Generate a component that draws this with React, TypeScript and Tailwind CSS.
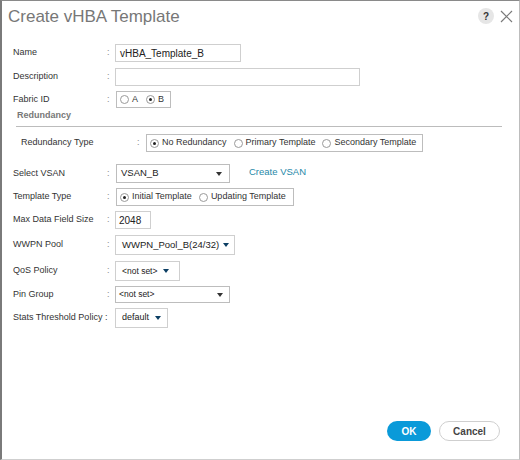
import React from "react";

const font = { fontFamily: '"Liberation Sans", Arial, sans-serif' };

function Radio({ checked }: { checked?: boolean }) {
  return (
    <span className="inline-flex w-[9px] h-[9px] rounded-full border border-[#9a9a9a] bg-white items-center justify-center shrink-0">
      {checked && <span className="w-[3px] h-[3px] rounded-full bg-[#222]" />}
    </span>
  );
}

function Arrow({ color = "#333" }: { color?: string }) {
  return (
    <svg width="6" height="4" viewBox="0 0 6 4" className="shrink-0">
      <path d="M0 0 L6 0 L3 4 Z" fill={color} />
    </svg>
  );
}

function Label({ children, w = "w-[94px]" }: { children: React.ReactNode; w?: string }) {
  return <div className={`${w} shrink-0 text-[#333]`}>{children}</div>;
}

function Colon() {
  return <div className="w-[8px] shrink-0 text-[#888]">:</div>;
}

export default function App() {
  return (
    <div
      style={font}
      className="w-[520px] h-[460px] bg-white border-l-2 border-t border-r border-b border-l-[#7a7a7a] border-t-[#8a8a8a] border-r-[#bdbdbd] border-b-[#cfcfcf] relative text-[9px] text-[#333] overflow-hidden"
    >
      {/* Header */}
      <div className="flex items-center h-[30px] pl-[6px] pr-[6px]">
        <div className="text-[17px] text-[#777] leading-none">Create vHBA Template</div>
        <div className="ml-auto flex items-center gap-[6px]">
          <div className="w-[16px] h-[16px] rounded-full bg-[#e6e6e6] flex items-center justify-center text-[10px] font-bold text-[#333]">?</div>
          <svg width="13" height="13" viewBox="0 0 13 13">
            <path d="M1 1 L12 12 M12 1 L1 12" stroke="#7a7a7a" strokeWidth="1.2" />
          </svg>
        </div>
      </div>

      <div className="pl-[11px] flex flex-col">
        {/* Name */}
        <div className="flex items-center h-[18px] mt-[13px]">
          <Label>Name</Label>
          <Colon />
          <div className="w-[126px] h-[18px] border border-[#cfcfcf] flex items-center px-[4px] text-[#222] text-[10px]">vHBA_Template_B</div>
        </div>
        {/* Description */}
        <div className="flex items-center h-[18px] mt-[6px]">
          <Label>Description</Label>
          <Colon />
          <div className="w-[245px] h-[18px] border border-[#cfcfcf]" />
        </div>
        {/* Fabric */}
        <div className="flex items-center h-[17px] mt-[5px]">
          <Label>Fabric ID</Label>
          <Colon />
          <div className="h-[17px] border border-[#bdbdbd] flex items-center gap-[3px] px-[3px] pr-[6px] ml-[1px]">
            <Radio />
            <span>A</span>
            <span className="w-[2px]" />
            <Radio checked />
            <span>B</span>
          </div>
        </div>
        {/* Redundancy section */}
        <div className="mt-[1px] pl-[4px] text-[9px] font-bold text-[#777] h-[12px] leading-[12px]">Redundancy</div>
        <div className="mt-[5px] ml-[3px] w-[486px] h-px bg-[#bcbcbc]" />
        <div className="flex items-center h-[18px] mt-[7px] pl-[8px]">
          <Label w="w-[116px]">Redundancy Type</Label>
          <Colon />
          <div className="h-[18px] border border-[#bdbdbd] flex items-center gap-[3px] pl-[3px] pr-[6px] ml-[1px]">
            <Radio checked />
            <span>No Redundancy</span>
            <span className="w-[1px]" />
            <Radio />
            <span>Primary Template</span>
            <span className="w-[1px]" />
            <Radio />
            <span>Secondary Template</span>
          </div>
        </div>
        {/* Select VSAN */}
        <div className="flex items-center h-[19px] mt-[12px]">
          <Label>Select VSAN</Label>
          <Colon />
          <div className="w-[114px] h-[19px] border border-[#bdbdbd] flex items-center px-[4px] ml-[1px]">
            <span className="text-[#222] text-[9.5px]">VSAN_B</span>
            <span className="ml-auto mr-[3px]"><Arrow /></span>
          </div>
          <span className="ml-[19px] text-[#1f88a8] text-[9.5px] -mt-[3px]">Create VSAN</span>
        </div>
        {/* Template Type */}
        <div className="flex items-center h-[18px] mt-[5px]">
          <Label>Template Type</Label>
          <Colon />
          <div className="h-[18px] border border-[#bdbdbd] flex items-center gap-[3px] pl-[3px] pr-[7px] ml-[1px]">
            <Radio checked />
            <span>Initial Template</span>
            <span className="w-[1px]" />
            <Radio />
            <span>Updating Template</span>
          </div>
        </div>
        {/* Max Data Field Size */}
        <div className="flex items-center h-[18px] mt-[5px]">
          <Label>Max Data Field Size</Label>
          <Colon />
          <div className="w-[36px] h-[18px] border border-[#cfcfcf] flex items-center px-[3px] text-[#222] text-[10px]">2048</div>
        </div>
        {/* WWPN Pool */}
        <div className="flex items-center h-[20px] mt-[6px]">
          <Label>WWPN Pool</Label>
          <Colon />
          <div className="w-[120px] h-[20px] border border-[#cfcfcf] flex items-center pl-[6px] pr-[6px] gap-[4px]">
            <span className="text-[#222] text-[9.5px]">WWPN_Pool_B(24/32)</span>
            <Arrow color="#0b3e63" />
          </div>
        </div>
        {/* QoS Policy */}
        <div className="flex items-center h-[20px] mt-[6px]">
          <Label>QoS Policy</Label>
          <Colon />
          <div className="w-[65px] h-[20px] border border-[#cfcfcf] flex items-center pl-[6px] gap-[6px]">
            <span className="text-[#222] text-[8.5px]">&lt;not set&gt;</span>
            <Arrow color="#0b3e63" />
          </div>
        </div>
        {/* Pin Group */}
        <div className="flex items-center h-[17px] mt-[5px]">
          <Label>Pin Group</Label>
          <Colon />
          <div className="w-[115px] h-[17px] border border-[#bdbdbd] flex items-center pl-[3px] pr-[6px]">
            <span className="text-[#222] text-[8.5px]">&lt;not set&gt;</span>
            <span className="ml-auto"><Arrow /></span>
          </div>
        </div>
        {/* Stats Threshold Policy */}
        <div className="flex items-center h-[20px] mt-[5px]">
          <div className="w-[102px] shrink-0 text-[#333]">Stats Threshold Policy :</div>
          <div className="w-[53px] h-[20px] border border-[#cfcfcf] flex items-center pl-[6px] gap-[6px]">
            <span className="text-[#222] text-[9px]">default</span>
            <Arrow color="#0b3e63" />
          </div>
        </div>
      </div>

      {/* Footer buttons */}
      <div className="absolute left-[385px] top-[420px] flex gap-[8px]">
        <div className="w-[44px] h-[20px] rounded-full bg-[#0a9ad9] text-white font-bold text-[10px] flex items-center justify-center">OK</div>
        <div className="w-[61px] h-[20px] rounded-full border border-[#cfcfcf] bg-white text-[#444] font-bold text-[10px] flex items-center justify-center">Cancel</div>
      </div>
    </div>
  );
}
